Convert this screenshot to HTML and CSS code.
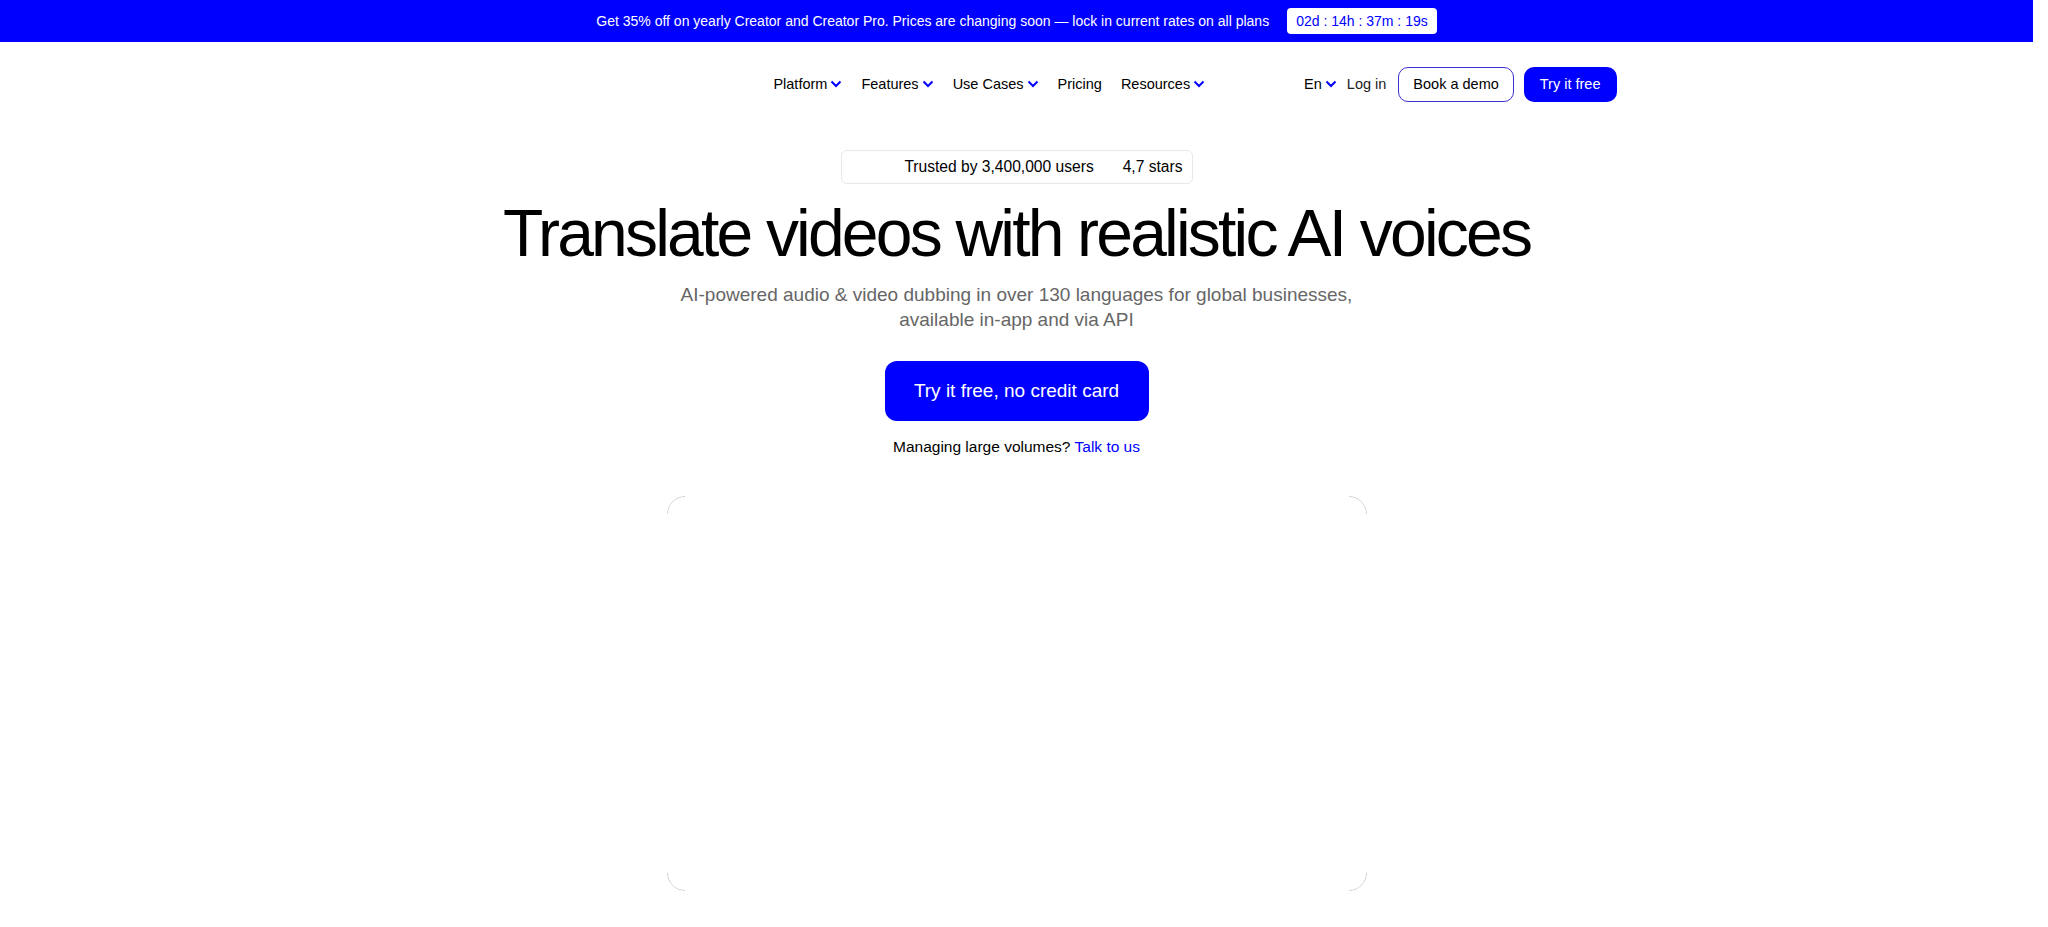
FILE: index.html
```html
<!DOCTYPE html>
<html lang="en">
<head>
  <meta charset="UTF-8">
  <title>Translate videos with realistic AI voices</title>
  <link rel="stylesheet" href="styles.css">
</head>
<body>

  <!-- Promo bar -->
  <div class="promo">
    <span>Get 35% off on yearly Creator and Creator Pro. Prices are changing soon — lock in current rates on all plans</span>
    <span class="timer">02d : 14h : 37m : 19s</span>
  </div>

  <!-- Header -->
  <header class="header">
    <div class="logo"></div>
    <nav class="menu">
      <a href="#">Platform <svg class="chev" viewBox="0 0 12 8"><path d="M1.5 1.5 6 6l4.5-4.5"/></svg></a>
      <a href="#">Features <svg class="chev" viewBox="0 0 12 8"><path d="M1.5 1.5 6 6l4.5-4.5"/></svg></a>
      <a href="#">Use Cases <svg class="chev" viewBox="0 0 12 8"><path d="M1.5 1.5 6 6l4.5-4.5"/></svg></a>
      <a href="#">Pricing</a>
      <a href="#">Resources <svg class="chev" viewBox="0 0 12 8"><path d="M1.5 1.5 6 6l4.5-4.5"/></svg></a>
    </nav>
    <div class="acciones">
      <a href="#" class="lang">En <svg class="chev" viewBox="0 0 12 8"><path d="M1.5 1.5 6 6l4.5-4.5"/></svg></a>
      <a href="#" class="login">Log in</a>
      <a href="#" class="btn btn-outline">Book a demo</a>
      <a href="#" class="btn btn-blue">Try it free</a>
    </div>
  </header>

  <!-- Hero -->
  <main class="hero">
    <div class="pill">
      <span class="pill-users">Trusted by 3,400,000 users</span>
      <span class="pill-stars">4,7 stars</span>
    </div>
    <h1>Translate videos with realistic AI voices</h1>
    <p class="sub">AI-powered audio &amp; video dubbing in over 130 languages for global businesses,<br>available in-app and via API</p>
    <a href="#" class="cta">Try it free, no credit card</a>
    <p class="volumes">Managing large volumes? <a href="#">Talk to us</a></p>
    <div class="video"></div>
    <div class="spacer"></div>
  </main>

</body>
</html>
```

FILE: styles.css
```css
body {
  margin: 0 15px 0 0;
  font-family: "Liberation Sans", Arial, sans-serif;
  color: #000;
  background: #fff;
}
a {
  color: inherit;
  text-decoration: none;
}

/* Promo bar */
.promo {
  height: 42px;
  background: #0000ff;
  color: #fff;
  font-size: 14px;
  display: flex;
  align-items: center;
  justify-content: center;
  gap: 18px;
}
.timer {
  background: #fff;
  color: #0000ff;
  border-radius: 4px;
  padding: 5px 9px;
  font-size: 14px;
}

/* Header */
.header {
  width: 1200px;
  margin: 0 auto;
  height: 84px;
  display: flex;
  align-items: center;
  justify-content: space-between;
}
.logo {
  width: 258px;
  height: 30px;
}
.menu {
  display: flex;
  gap: 19px;
  font-size: 14.5px;
}
.menu a, .lang {
  display: flex;
  align-items: center;
  gap: 3px;
}
.chev {
  width: 12px;
  height: 8px;
  fill: none;
  stroke: #0000ff;
  stroke-width: 2;
}
.acciones {
  display: flex;
  align-items: center;
  gap: 10px;
  font-size: 14.5px;
}
.login {
  margin-right: 2px;
  color: #222;
}
.btn {
  height: 35px;
  box-sizing: border-box;
  display: flex;
  align-items: center;
  padding: 0 15px;
  border-radius: 10px;
}
.btn-outline {
  border: 1px solid #3b2fd0;
  padding: 0 14px;
}
.btn-blue {
  background: #0000ff;
  color: #fff;
  padding: 0 16px;
}

/* Hero */
.hero {
  display: flex;
  flex-direction: column;
  align-items: center;
  padding-top: 24px;
}
.pill {
  width: 352px;
  height: 34px;
  box-sizing: border-box;
  border: 1px solid #e8e8e8;
  border-radius: 6px;
  display: flex;
  align-items: center;
  justify-content: flex-end;
  gap: 29px;
  padding-right: 9px;
  font-size: 15.6px;
}
h1 {
  font-size: 66px;
  font-weight: normal;
  letter-spacing: -2.8px;
  margin: 9px 0 0;
  line-height: 80px;
}
.sub {
  margin: 9px 0 0;
  text-align: center;
  font-size: 19px;
  line-height: 25px;
  color: #666;
}
.cta {
  margin-top: 29px;
  width: 264px;
  height: 60px;
  display: flex;
  align-items: center;
  justify-content: center;
  background: #0000ff;
  color: #fff;
  border-radius: 12px;
  font-size: 19px;
}
.volumes {
  margin: 17px 0 0;
  font-size: 15.5px;
  line-height: 18px;
}
.volumes a {
  color: #0000ff;
}

/* Video frame: only its rounded corners show */
.video {
  margin-top: 40px;
  width: 700px;
  height: 395px;
  box-sizing: border-box;
  border: 1px solid #cfcfcf;
  border-radius: 18px;
  -webkit-mask:
    linear-gradient(#000 0 0) top left / 18px 18px no-repeat,
    linear-gradient(#000 0 0) top right / 18px 18px no-repeat,
    linear-gradient(#000 0 0) bottom left / 18px 18px no-repeat,
    linear-gradient(#000 0 0) bottom right / 18px 18px no-repeat;
  mask:
    linear-gradient(#000 0 0) top left / 18px 18px no-repeat,
    linear-gradient(#000 0 0) top right / 18px 18px no-repeat,
    linear-gradient(#000 0 0) bottom left / 18px 18px no-repeat,
    linear-gradient(#000 0 0) bottom right / 18px 18px no-repeat;
}
.spacer {
  height: 400px;
}
```
